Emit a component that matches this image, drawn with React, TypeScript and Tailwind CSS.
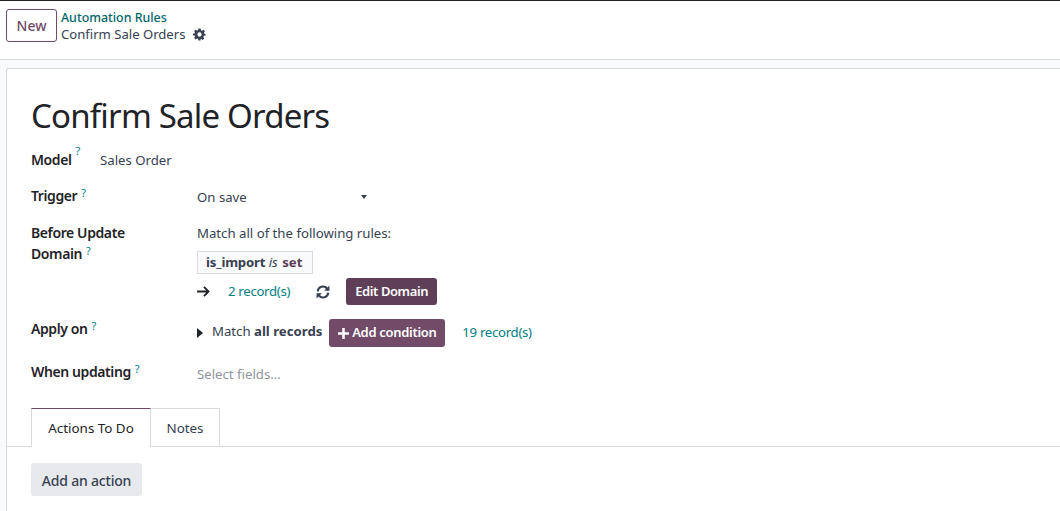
import type { ReactNode } from "react";

function Help() {
  return <sup className="relative -top-1 ml-1 text-[11px] font-normal leading-none tracking-normal text-[#017e84]">?</sup>;
}

function Label({ children, className = "" }: { children: ReactNode; className?: string }) {
  return <div className={`w-[166px] shrink-0 text-[14px] font-semibold leading-[21px] tracking-[-0.4px] text-[#1f2328] ${className}`}>{children}</div>;
}

export default function App() {
  return (
    <div className="h-[511px] w-[1060px] overflow-hidden bg-[#f9fafb] font-['Noto_Sans',sans-serif] text-[13.2px] text-[#374151]">
      {/* control panel */}
      <div className="flex h-[60px] items-start gap-[4px] border-t border-b border-t-[#1f2328] border-b-[#d8dadd] bg-white pl-[6px] pt-[8px]">
        <button className="h-[33px] w-[51px] rounded-[3px] border border-[#714b67] text-[14px] font-medium text-[#714b67]">New</button>
        <div className="leading-[17px]">
          <div className="text-[12.4px] font-medium text-[#01666b]">Automation Rules</div>
          <div className="flex items-center gap-2 text-[13.1px] text-[#374151]">
            Confirm Sale Orders
            <svg viewBox="0 0 24 24" className="h-[13px] w-[13px]" fill="#374151">
              <path fillRule="evenodd" d="M10 1h4l.6 3.2 1.900.8 2.700-1.800 2.800 2.800-1.800 2.700.8 1.900L23 11v3l-3.200.6-.8 1.900 1.800 2.700-2.800 2.800-2.700-1.800-1.900.8L14 23h-4l-.6-2.900-1.900-.8-2.700 1.800L2 18.300l1.800-2.700-.8-1.900L0 13.500v-3l3-.6.8-1.900L2 5.800 4.800 3l2.700 1.800 1.900-.8zM12 8a4 4 0 1 0 0 8 4 4 0 0 0 0-8z" />
            </svg>
          </div>
        </div>
      </div>

      {/* form sheet */}
      <div className="ml-[6px] mt-[8px] h-[460px] rounded-tl-[3px] border border-r-0 border-[#d8dadd] bg-white">
        <h1 className="pl-[24px] pt-[25px] text-[33px] font-normal leading-[44px] tracking-[-0.8px] text-[#1f2328]">Confirm Sale Orders</h1>

        <div className="flex items-center pl-[24px] pt-[13px]">
          <div className="-mt-[2px] flex w-[69px] text-[14px] font-semibold leading-[21px] tracking-[-0.4px] text-[#1f2328]">Model<Help /></div>
          <span>Sales Order</span>
        </div>

        <div className="flex items-center pl-[24px] pt-[17px]">
          <Label className="-mt-[4px]">Trigger<Help /></Label>
          <div className="flex w-[172px] items-center justify-between">
            <span>On save</span>
            <span className="mb-[2px] mr-[2px] h-0 w-0 border-x-[3.5px] border-t-[4px] border-x-transparent border-t-[#374151]" />
          </div>
        </div>

        <div className="flex pl-[24px] pt-[15px]">
          <Label className="-mt-px">
            <div>Before Update</div>
            <div>Domain<Help /></div>
          </Label>
          <div>
            <div className="leading-[21px]">Match all of the following rules:</div>
            <div className="mt-[7px] h-[23px] w-[116px] border border-[#d8dadd] bg-[#f9fafb] pl-[8px] leading-[21px]">
              <span className="font-bold tracking-[-0.2px] text-[#374151]">is_import</span> <i className="pr-[1px]">is</i> <b className="text-[#5f3e58]">set</b>
            </div>
            <div className="mt-[4px] flex h-[28px] items-center">
              <svg viewBox="0 0 14 12" className="h-[11px] w-[13px]" fill="none" stroke="#1f2328" strokeWidth="2"><path d="M0 6h12M7.500 1l5 5-5 5" /></svg>
              <span className="ml-[18px] pt-px tracking-[-0.3px] text-[#017e84]">2 record(s)</span>
              <svg viewBox="0 0 24 24" className="ml-[26px] h-[14px] w-[14px]" fill="none" stroke="#374151" strokeWidth="3.5"><path d="M3 11a9 9 0 0 1 16-5l2 2M21 13a9 9 0 0 1-16 5l-2-2" /><path d="M23 1v9h-9zM1 23v-9h9z" fill="#374151" stroke="none" /></svg>
              <button className="ml-[16px] h-[27px] w-[91px] rounded-[3px] bg-[#5f3e58] text-[13px] font-semibold tracking-[-0.4px] text-white">Edit Domain</button>
            </div>
          </div>
        </div>

        <div className="flex items-center pl-[24px] pt-[12px]">
          <Label className="mb-[10px]">Apply on<Help /></Label>
          <span className="h-0 w-0 border-y-[5.5px] border-l-[6px] border-y-transparent border-l-[#1f2328]" />
          <span className="mb-[2px] ml-[9px]">Match <b className="font-bold">all records</b></span>
          <button className="ml-[7px] flex h-[28px] w-[116px] items-center justify-center gap-[3px] rounded-[3px] bg-[#714b67] text-[13px] font-semibold tracking-[-0.3px] text-white">
            <svg viewBox="0 0 11 11" className="h-[11px] w-[11px]" fill="none" stroke="#fff" strokeWidth="2.5"><path d="M5.500 0v11M0 5.500h11" /></svg>
            Add condition
          </button>
          <span className="ml-[17px] tracking-[-0.3px] text-[#017e84]">19 record(s)</span>
        </div>

        <div className="flex items-center pl-[24px] pt-[12px]">
          <Label className="mb-[2px]">When updating<Help /></Label>
          <span className="pt-[4px] text-[#8f959e]">Select fields...</span>
        </div>

        {/* tabs */}
        <div className="mt-[24px] flex h-[39px] border-b border-[#d8dadd] pl-[24px]">
          <div className="-mb-px flex h-[39px] w-[120px] items-center justify-center border-x border-t border-x-[#d8dadd] border-t-[#714b67] bg-white text-[13.4px] text-[#1f2328]">Actions To Do</div>
          <div className="flex h-[38px] w-[69px] items-center justify-center border-r border-t border-[#d8dadd] text-[13.4px]">Notes</div>
        </div>

        <button className="ml-[24px] mt-[16px] h-[33px] w-[111px] rounded-[3px] bg-[#e7e9ed] pt-px text-[14px] font-medium tracking-[-0.2px] text-[#374151]">Add an action</button>
      </div>
    </div>
  );
}
